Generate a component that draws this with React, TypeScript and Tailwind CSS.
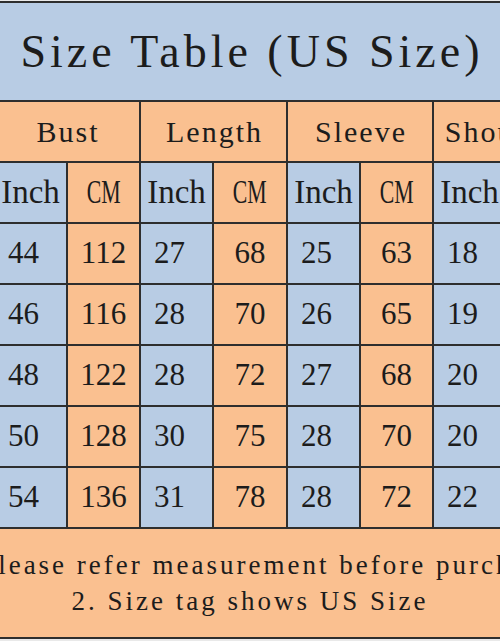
const rows = [
  ["44", "112", "27", "68", "25", "63", "18", "46"],
  ["46", "116", "28", "70", "26", "65", "19", "48"],
  ["48", "122", "28", "72", "27", "68", "20", "50"],
  ["50", "128", "30", "75", "28", "70", "20", "50"],
  ["54", "136", "31", "78", "28", "72", "22", "55"],
];

const groups = ["Bust", "Length", "Sleeve", "Shoulder"];

const serif = "font-['Liberation_Serif',serif] text-[#1c1c1c]";

function cellBg(i: number) {
  return i % 2 === 0 ? "bg-[#b8cce4]" : "bg-[#fac090]";
}

export default function App() {
  return (
    <div className="h-[641px] w-[500px] overflow-hidden bg-[#e9e9e9] pt-px">
      <div className="border-y-2 border-[#2e2e2e] bg-[#2e2e2e]">
        <div className="flex h-[97px] items-center justify-center bg-[#b8cce4]">
          <span className={`${serif} whitespace-nowrap pl-[4px] text-[46px] tracking-[4px]`}>
            Size Table (US Size)
          </span>
        </div>

        <div className="ml-[-5px] mt-[2px] grid w-[584px] grid-cols-[71px_71px_71px_72px_71px_71px_71px_71px] gap-[2px]">
          {groups.map((g) => (
            <div key={g} className="col-span-2 flex h-[59px] items-center justify-center bg-[#fac090]">
              <span className={`${serif} whitespace-nowrap pl-[2px] text-[30px] tracking-[2px]`}>{g}</span>
            </div>
          ))}

          {groups.flatMap((g) => [
            <div key={g + "in"} className="flex h-[59px] items-center justify-center bg-[#b8cce4]">
              <span className={`${serif} text-[33px]`}>Inch</span>
            </div>,
            <div key={g + "cm"} className="flex h-[59px] items-center justify-center bg-[#fac090]">
              <span className={`${serif} inline-block scale-x-[0.66] text-[33px]`}>CM</span>
            </div>,
          ])}

          {rows.flatMap((r, ri) =>
            r.map((v, ci) => (
              <div
                key={ri + "-" + ci}
                className={`flex h-[59px] items-center ${cellBg(ci)} ${ci % 2 === 0 ? "justify-start pl-[13px]" : "justify-center"}`}
              >
                <span className={`${serif} text-[31px]`}>{v}</span>
              </div>
            ))
          )}
        </div>

        <div className="mt-[2px] flex h-[108px] flex-col items-center justify-center gap-[8px] bg-[#fac090]">
          <div className="flex w-full justify-center">
            <span className={`${serif} shrink-0 whitespace-nowrap text-[27px] leading-[28px] tracking-[3px]`}>
              1. Please refer measurement before purchase
            </span>
          </div>
          <div className="flex w-full justify-center">
            <span className={`${serif} shrink-0 whitespace-nowrap text-[27px] leading-[28px] tracking-[3px]`}>
              2. Size tag shows US Size
            </span>
          </div>
        </div>
      </div>
    </div>
  );
}
